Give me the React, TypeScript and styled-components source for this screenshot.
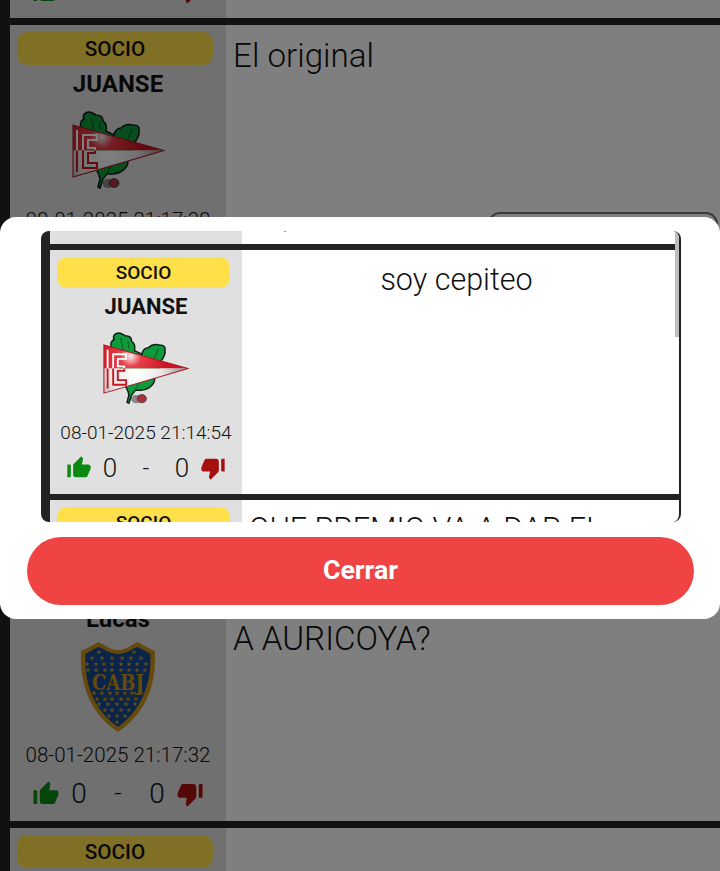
import React from 'react';
import styled, { createGlobalStyle } from 'styled-components';
import { MdThumbUpAlt, MdThumbDownAlt } from 'react-icons/md';

type Crest = 'edlp' | 'boca';

type Post = {
  user: string;
  date: string;
  crest: Crest;
  lines: string[];
};

const backgroundPosts: Post[] = [
  { user: 'JUANSE', date: '08-01-2025 21:17:50', crest: 'edlp', lines: ['Hola'] },
  { user: 'JUANSE', date: '08-01-2025 21:17:38', crest: 'edlp', lines: ['El original'] },
  { user: 'JUANSE', date: '08-01-2025 21:17:35', crest: 'edlp', lines: [''] },
  { user: 'Lucas', date: '08-01-2025 21:17:32', crest: 'boca', lines: ['QUE PREMIO VA A DAR EL', 'A AURICOYA?'] },
  { user: 'JUANSE', date: '08-01-2025 21:17:20', crest: 'edlp', lines: [''] },
];

const starRows = [
  { y: 11, xs: [19, 54] },
  { y: 17, xs: [12, 22, 32, 42, 51, 61] },
  { y: 23, xs: [7, 16, 24, 32, 41, 49, 57, 66] },
  { y: 29, xs: [8, 16, 25, 32, 41, 49, 57, 65] },
  { y: 52, xs: [14, 22, 30, 37, 45, 52, 61] },
  { y: 58, xs: [17, 25, 32, 41, 48, 56] },
  { y: 63, xs: [19, 28, 37, 46, 55] },
  { y: 69, xs: [25, 32, 41, 49] },
  { y: 75, xs: [29, 37, 45] },
  { y: 81, xs: [37] },
];

const EdlpCrest = ({ id }: { id: string }) => (
  <svg viewBox="0 0 93 82" width="100%" height="100%">
    <defs>
      <radialGradient id={`${id}-red`} gradientUnits="userSpaceOnUse" cx="30" cy="26" r="38">
        <stop offset="0%" stopColor="#fbeeee" />
        <stop offset="30%" stopColor="#e8404a" />
        <stop offset="100%" stopColor="#cc1420" />
      </radialGradient>
      <radialGradient id={`${id}-white`} gradientUnits="userSpaceOnUse" cx="36" cy="44" r="58">
        <stop offset="0%" stopColor="#ffffff" />
        <stop offset="50%" stopColor="#e6e6e6" />
        <stop offset="100%" stopColor="#808080" />
      </radialGradient>
      <clipPath id={`${id}-top`}>
        <rect x="0" y="0" width="93" height="39.5" />
      </clipPath>
      <clipPath id={`${id}-bottom`}>
        <rect x="0" y="39.5" width="93" height="43" />
      </clipPath>
    </defs>
    <path
      d="M9 16C7 12 10 9 12 8 10 4 13 1 17 1c3 0 5 2 7 3 4 0 7 2 7 6 3 2 4 5 3 10 4 2 6 3 8 4 1-4 3-7 7-7 3-3 8-4 12-3 5 0 7 2 6 6 1 4-2 8-4 11l-7 19c0 4-3 8-6 10-3 2-6 3-9 3h-6l-4 5-3 9-2-1 2-8-1-4-4-8v-6z"
      fill="#0f9a3c"
      stroke="#10201a"
      strokeWidth="1.6"
    />
    <path d="M19 6l3 14M27 10l1 8M60 18l-5 12M40 53l-7 13" stroke="#0a5c28" strokeWidth="1.1" fill="none" />
    <ellipse cx="36" cy="72.5" rx="5" ry="4" fill="#8a8a8a" stroke="#555" strokeWidth="0.6" />
    <ellipse cx="42" cy="72" rx="5" ry="4.4" fill="#a8323a" stroke="#333" strokeWidth="0.8" />
    <path d="M1 14L92 39.5H1z" fill={`url(#${id}-red)`} />
    <path d="M1 39.5H92L1 66z" fill={`url(#${id}-white)`} />
    <path d="M1 14L92 39.5 1 66z" fill="none" stroke="#b01620" strokeWidth="1.1" />
    <g fill="none" strokeWidth="2">
      <g clipPath={`url(#${id}-top)`} stroke="#fff">
        <path d="M5 19V61M11 24H25V29H16V37H23V42H16V52H25V57H11Z" />
      </g>
      <g clipPath={`url(#${id}-bottom)`} stroke="#cc1420">
        <path d="M5 19V61M11 24H25V29H16V37H23V42H16V52H25V57H11Z" />
      </g>
    </g>
  </svg>
);

const BocaCrest = () => (
  <svg viewBox="0 0 76 92" width="100%" height="100%">
    <path
      d="M18 1c5 1 11 8 20 8s15-7 20-8c5 3 12 7 17 9 1 26-4 59-37 81C5 69 0 36 1 10c5-2 12-6 17-9z"
      fill="#c8941a"
    />
    <path
      d="M18 6c6 1 11 7 20 7s14-6 20-7c4 2 9 5 12.5 7 .5 23-4 52-32.5 73C9 65 4.500 36 5.500 13 9 11 14 8 18 6z"
      fill="#18498f"
    />
    {starRows.map((row) =>
      row.xs.map((x) => (
        <polygon
          key={`${row.y}-${x}`}
          transform={`translate(${x} ${row.y})`}
          points="0,-2.6 0.7,-0.8 2.6,-0.8 1.1,0.4 1.6,2.3 0,1.2 -1.6,2.3 -1.1,0.4 -2.6,-0.8 -0.7,-0.8"
          fill="#c8941a"
        />
      )),
    )}
    <CrestLetters x="38" y="49" textAnchor="middle" textLength="52" lengthAdjust="spacingAndGlyphs">
      CABJ
    </CrestLetters>
  </svg>
);

const Sidebar = ({ post, compact, crestId }: { post: Post; compact?: boolean; crestId: string }) => (
  <SideColumn $compact={compact}>
    <Badge $compact={compact}>SOCIO</Badge>
    <UserName $compact={compact}>{post.user}</UserName>
    <CrestSlot $compact={compact}>
      {post.crest === 'edlp' ? (
        <EdlpSize $compact={compact}>
          <EdlpCrest id={crestId} />
        </EdlpSize>
      ) : (
        <BocaSize>
          <BocaCrest />
        </BocaSize>
      )}
    </CrestSlot>
    <DateText $compact={compact}>{post.date}</DateText>
    <Votes $compact={compact}>
      <MdThumbUpAlt color="#0b8a12" />
      <VoteCount $compact={compact}>0</VoteCount>
      <VoteDash $compact={compact}>-</VoteDash>
      <VoteCount $compact={compact}>0</VoteCount>
      <MdThumbDownAlt color="#a81010" />
    </Votes>
  </SideColumn>
);

const App = () => {
  const modalPost: Post = { user: 'JUANSE', date: '08-01-2025 21:14:54', crest: 'edlp', lines: ['soy cepiteo'] };

  return (
    <>
      <GlobalStyle />
      <Viewport>
        <Page>
          {backgroundPosts.map((post, index) => (
            <PostRow key={index.toString()}>
              <Sidebar post={post} crestId={`bg-${index}`} />
              <PostBody>
                {post.lines.map((line) => (
                  <PostLine key={line}>{line}</PostLine>
                ))}
                {index === 1 && <ReplyBox />}
              </PostBody>
            </PostRow>
          ))}
        </Page>
      </Viewport>

      <Overlay>
        <Modal>
          <Scroller>
            <ScrollThumb />
            <StubRow>
              <StubSide />
              <StubDot />
            </StubRow>
            <ModalRow>
              <Sidebar post={modalPost} compact crestId="modal" />
              <ModalBody>{modalPost.lines[0]}</ModalBody>
            </ModalRow>
            <ClippedRow>
              <ClippedSide>
                <Badge $compact>SOCIO</Badge>
              </ClippedSide>
              <ClippedText>QUE PREMIO VA A DAR EL</ClippedText>
            </ClippedRow>
          </Scroller>
          <CloseButton type="button">Cerrar</CloseButton>
        </Modal>
      </Overlay>
    </>
  );
};

const GlobalStyle = createGlobalStyle`
  html, body {
    margin: 0;
    padding: 0;
    height: 871px;
    overflow: hidden;
    background: #fff;
    font-family: Roboto, "Liberation Sans", sans-serif;
    color: #111;
  }
`;

const CrestLetters = styled.text`
  font-family: "DejaVu Serif", serif;
  font-weight: 700;
  font-size: 23px;
  fill: #c8941a;
`;

const Viewport = styled.div`
  height: 871px;
  overflow: hidden;
`;

const Page = styled.div`
  margin-top: -242.7px;
  border-left: 10px solid #222;
  display: flex;
  flex-direction: column;
`;

const PostRow = styled.div`
  display: flex;
  flex: none;
  height: 260.7px;
  border-bottom: 7px solid #222;
`;

const SideColumn = styled.div<{ $compact?: boolean }>`
  flex: none;
  box-sizing: border-box;
  width: ${(p) => (p.$compact ? '192px' : '216px')};
  padding-top: ${(p) => (p.$compact ? '6.7px' : '7.3px')};
  background: #e0e0e0;
  display: flex;
  flex-direction: column;
  align-items: center;
  overflow: hidden;
`;

const Badge = styled.div<{ $compact?: boolean }>`
  flex: none;
  align-self: flex-start;
  margin-left: 7px;
  width: ${(p) => (p.$compact ? '173px' : '196px')};
  height: ${(p) => (p.$compact ? '31.3px' : '32.7px')};
  border-radius: 10px;
  background: #ffe04a;
  color: #111;
  font-size: ${(p) => (p.$compact ? '19px' : '20.7px')};
  font-weight: 500;
  display: flex;
  align-items: center;
  justify-content: center;
`;

const UserName = styled.div<{ $compact?: boolean }>`
  flex: none;
  height: ${(p) => (p.$compact ? '37px' : '38px')};
  line-height: ${(p) => (p.$compact ? '37px' : '38px')};
  font-size: ${(p) => (p.$compact ? '22px' : '24px')};
  font-weight: 700;
  color: #111;
`;

const CrestSlot = styled.div<{ $compact?: boolean }>`
  flex: none;
  height: ${(p) => (p.$compact ? '90px' : '98px')};
  display: flex;
  align-items: center;
  justify-content: center;
`;

const EdlpSize = styled.div<{ $compact?: boolean }>`
  width: ${(p) => (p.$compact ? '86px' : '93px')};
  height: ${(p) => (p.$compact ? '76px' : '82px')};
`;

const BocaSize = styled.div`
  width: 76px;
  height: 92px;
`;

const DateText = styled.div<{ $compact?: boolean }>`
  flex: none;
  height: ${(p) => (p.$compact ? '36px' : '38px')};
  line-height: ${(p) => (p.$compact ? '36px' : '38px')};
  font-size: ${(p) => (p.$compact ? '19.05px' : '20.55px')};
  font-weight: 300;
  color: #111;
  white-space: nowrap;
`;

const Votes = styled.div<{ $compact?: boolean }>`
  flex: none;
  height: ${(p) => (p.$compact ? '34px' : '38px')};
  display: grid;
  grid-template-columns: ${(p) => (p.$compact ? '28px 34px 38px 34px 28px' : '30px 36px 42px 36px 30px')};
  align-items: center;
  justify-items: center;
  font-size: ${(p) => (p.$compact ? '28px' : '30px')};

  svg {
    margin-top: ${(p) => (p.$compact ? '1px' : '2px')};
  }
`;

const VoteCount = styled.span<{ $compact?: boolean }>`
  font-weight: 300;
  font-size: ${(p) => (p.$compact ? '26px' : '28px')};
  color: #111;
`;

const VoteDash = styled.span<{ $compact?: boolean }>`
  font-weight: 300;
  font-size: ${(p) => (p.$compact ? '24px' : '26px')};
  color: #111;
`;

const PostBody = styled.div`
  flex: 1;
  min-width: 0;
  background: #fff;
  padding: 7px 7px 0;
  display: flex;
  flex-direction: column;
  position: relative;
`;

const PostLine = styled.div`
  font-size: 33.2px;
  line-height: 48px;
  font-weight: 300;
  color: #111;
`;

const ReplyBox = styled.div`
  position: absolute;
  right: 2px;
  left: 262px;
  top: 187px;
  height: 60px;
  border: 2px solid #777;
  border-radius: 12px;
`;

const Overlay = styled.div`
  position: fixed;
  inset: 0;
  background: rgba(0, 0, 0, 0.5);
  display: flex;
  flex-direction: column;
  justify-content: flex-start;
  padding-top: 217px;
  box-sizing: border-box;
`;

const Modal = styled.div`
  box-sizing: border-box;
  width: 720px;
  height: 402px;
  padding: 14px 26px 14px 27px;
  background: #fff;
  border-radius: 16px;
  display: flex;
  flex-direction: column;
  align-items: stretch;
`;

const Scroller = styled.div`
  position: relative;
  box-sizing: border-box;
  flex: none;
  width: 640px;
  height: 291px;
  margin-left: 14px;
  border-left: 9px solid #222;
  border-right: 2px solid #222;
  border-radius: 8px;
  overflow: hidden;
`;

const ScrollThumb = styled.div`
  position: absolute;
  right: 0;
  top: 0;
  width: 4px;
  height: 106px;
  background: #bdbdbd;
`;

const StubRow = styled.div`
  display: flex;
  height: 13px;
  border-bottom: 6px solid #222;
`;

const StubSide = styled.div`
  width: 192px;
  background: #e0e0e0;
`;

const StubDot = styled.div`
  width: 2px;
  height: 1px;
  margin-left: 42px;
  background: #999;
`;

const ModalRow = styled.div`
  display: flex;
  height: 244px;
  border-bottom: 6px solid #222;
`;

const ModalBody = styled.div`
  flex: 1;
  box-sizing: border-box;
  padding: 11px 8px 0 0;
  text-align: center;
  font-size: 30.5px;
  line-height: 38px;
  font-weight: 300;
  color: #111;
`;

const ClippedRow = styled.div`
  display: flex;
  height: 60px;
`;

const ClippedSide = styled.div`
  flex: none;
  box-sizing: border-box;
  width: 192px;
  padding-top: 7px;
  background: #e0e0e0;
`;

const ClippedText = styled.div`
  padding: 9px 0 0 7px;
  font-size: 30.5px;
  line-height: 40px;
  font-weight: 300;
  color: #111;
  white-space: nowrap;
`;

const CloseButton = styled.button`
  flex: none;
  height: 68px;
  width: 667px;
  margin-top: 15px;
  padding: 0 0 2px;
  border: none;
  border-radius: 34px;
  background: #f04444;
  color: #fff;
  font-family: Roboto, "Liberation Sans", sans-serif;
  font-size: 26.7px;
  font-weight: 700;
`;

export default App;
